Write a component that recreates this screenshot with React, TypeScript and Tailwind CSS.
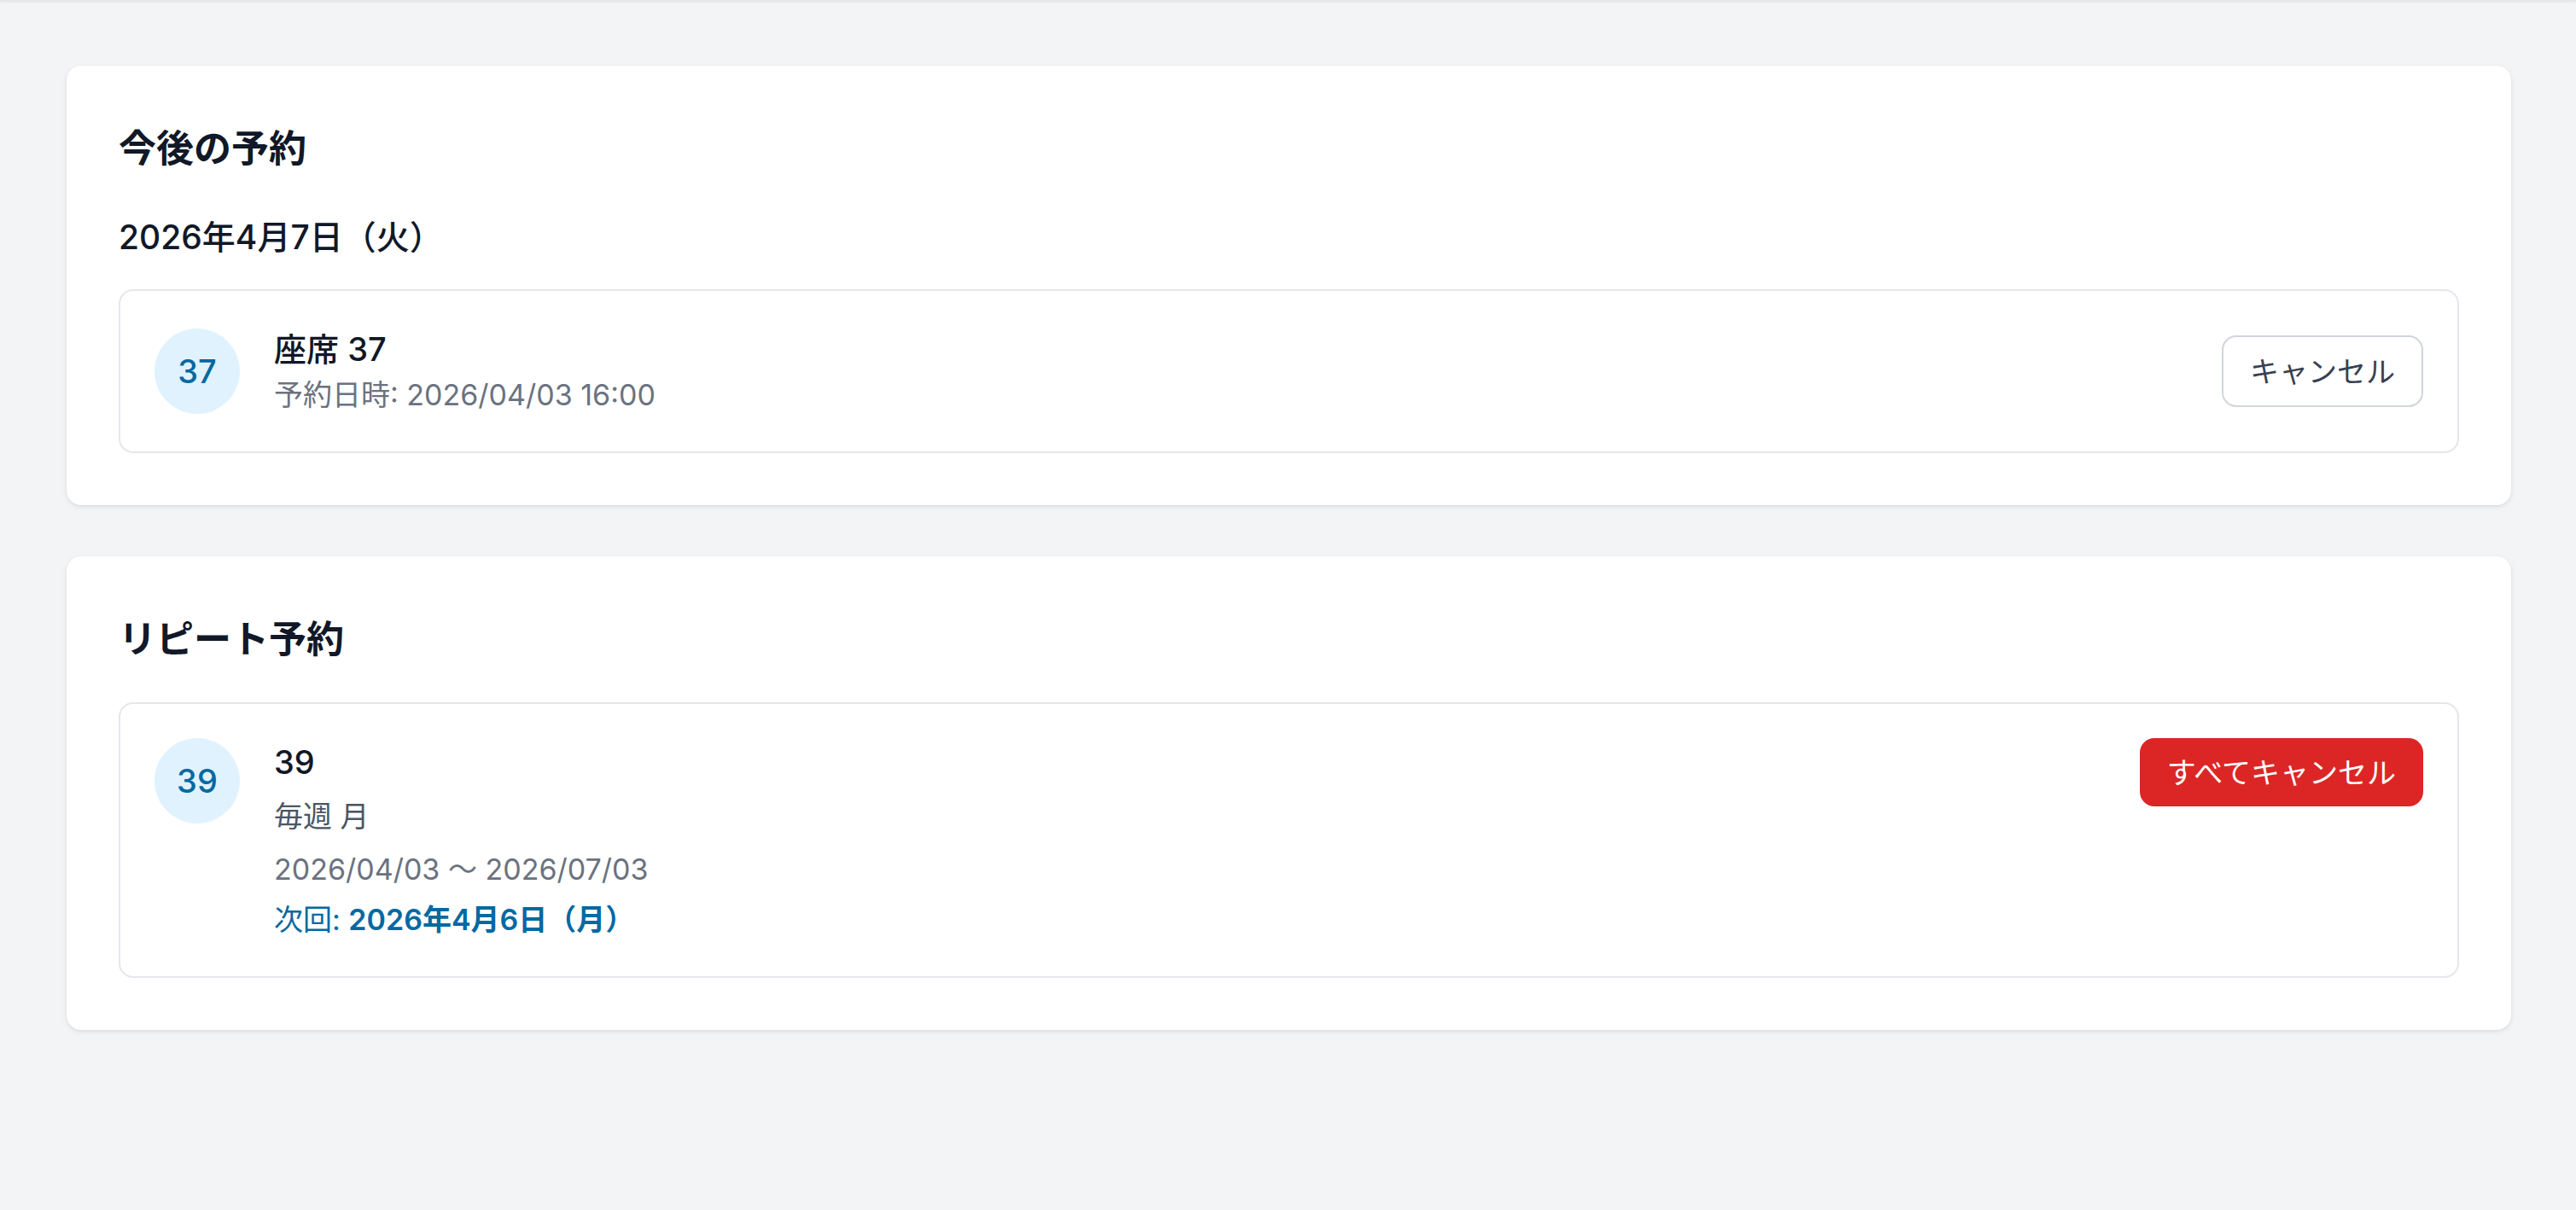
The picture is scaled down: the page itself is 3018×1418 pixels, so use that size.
import React from "react";

const font = "font-['Inter','Noto_Sans_CJK_JP',sans-serif]";

function SeatCircle({ n }: { n: string }) {
  return (
    <div className="flex h-[100px] w-[100px] shrink-0 items-center justify-center rounded-full bg-[#e0f2fe] text-[38px] font-medium text-[#0369a1]">
      {n}
    </div>
  );
}

export default function App() {
  return (
    <div className={`min-h-screen bg-[#f3f4f6] ${font} text-[#111827]`}>
      <div className="h-[2px] bg-[#e5e7eb] shadow-[0_1px_2px_rgba(0,0,0,0.05)]" />
      <main className="flex flex-col gap-[60px] pl-[78px] pr-[76px] pt-[75px] pb-[60px]">
        {/* Upcoming reservations */}
        <section className="rounded-[17px] bg-white px-[61px] pb-[61px] pt-[61px] shadow-[0_2px_6px_rgba(0,0,0,0.08),0_1px_3px_rgba(0,0,0,0.05)]">
          <h2 className="text-[44px] font-bold leading-[72px]">今後の予約</h2>
          <h3 className="mt-[38px] text-[39px] font-medium leading-[60px]">2026年4月7日（火）</h3>
          <div className="mt-[31px] flex items-center gap-[40px] rounded-[17px] border-2 border-[#e5e7eb] p-[40px]">
            <SeatCircle n="37" />
            <div className="flex min-w-0 flex-1 flex-col">
              <div className="text-[38px] font-medium leading-[56px]">座席 37</div>
              <div className="text-[34px] leading-[52px] text-[#6b7280]">予約日時: 2026/04/03 16:00</div>
            </div>
            <button className="flex h-[84px] items-center rounded-[17px] border-2 border-[#d1d5db] bg-white px-[31px] text-[34px] text-[#374151]">
              キャンセル
            </button>
          </div>
        </section>

        {/* Repeat reservations */}
        <section className="rounded-[17px] bg-white px-[61px] pb-[61px] pt-[61px] shadow-[0_2px_6px_rgba(0,0,0,0.08),0_1px_3px_rgba(0,0,0,0.05)]">
          <h2 className="text-[44px] font-bold leading-[72px]">リピート予約</h2>
          <div className="mt-[38px] flex items-start gap-[40px] rounded-[17px] border-2 border-[#e5e7eb] p-[40px]">
            <SeatCircle n="39" />
            <div className="flex min-w-0 flex-1 flex-col">
              <div className="text-[38px] font-medium leading-[56px]">39</div>
              <div className="mt-[10px] text-[34px] leading-[52px] text-[#4b5563]">毎週 月</div>
              <div className="mt-[10px] text-[34px] leading-[52px] text-[#6b7280]">2026/04/03 〜 2026/07/03</div>
              <div className="mt-[7px] text-[34px] leading-[52px] text-[#0369a1]">
                次回: <span className="font-semibold">2026年4月6日（月）</span>
              </div>
            </div>
            <button className="flex h-[80px] items-center rounded-[17px] bg-[#dc2626] px-[32px] text-[34px] text-white">
              すべてキャンセル
            </button>
          </div>
        </section>
      </main>
    </div>
  );
}
